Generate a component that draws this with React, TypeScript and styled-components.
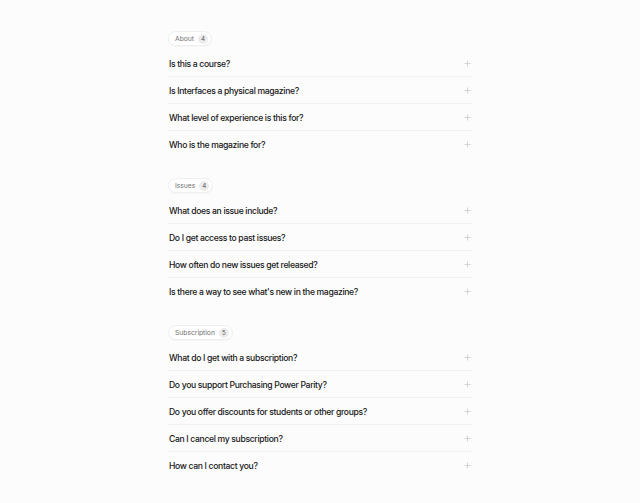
import React from 'react'
import styled, { createGlobalStyle } from 'styled-components'

const Global = createGlobalStyle`
    html, body {
        margin: 0;
        padding: 0;
        background: #fcfcfc;
    }
    body {
        font-family: Inter, "Noto Sans", sans-serif;
        -webkit-font-smoothing: antialiased;
    }
`

const Page = styled.div`
    display: flex;
    justify-content: center;
    padding: 31px 0 0 0;
`

const Column = styled.div`
    width: 304px;
    display: flex;
    flex-direction: column;
    gap: 20px;
`

const Group = styled.section`
    display: flex;
    flex-direction: column;
    align-items: flex-start;
`

const Badge = styled.div`
    display: inline-flex;
    align-items: center;
    gap: 4px;
    height: 15px;
    box-sizing: border-box;
    padding: 0 3px 0 6px;
    border: 1px solid #efefef;
    border-radius: 999px;
    background: #fff;
    box-shadow: 0 1px 1px rgba(0, 0, 0, 0.03);
    margin-bottom: 4px;
    span {
        font-size: 6.8px;
        color: #727272;
        letter-spacing: -0.05px;
    }
`

const Count = styled.i`
    font-style: normal;
    display: flex;
    align-items: center;
    justify-content: center;
    width: 10px;
    height: 10px;
    border-radius: 50%;
    background: #ececec;
    font-size: 6.2px;
    color: #555;
`

const List = styled.ul`
    list-style: none;
    margin: 0;
    padding: 0;
    width: 100%;
`

const Row = styled.li`
    display: flex;
    align-items: center;
    justify-content: space-between;
    height: 27px;
    box-sizing: border-box;
    border-bottom: 1px solid #f1f1f1;
    padding: 1px 1px 0 1px;
    font-size: 8.6px;
    font-weight: 500;
    letter-spacing: -0.33px;
    color: #171717;
    &:last-child {
        border-bottom-color: transparent;
    }
`

const Plus = () => (
    <svg width="7" height="7" viewBox="0 0 8 8" fill="none">
        <path d="M4 0.5v7M0.5 4h7" stroke="#cbcbcb" strokeWidth="0.9" />
    </svg>
)

const groups = [
    {
        title: 'About',
        items: [
            'Is this a course?',
            'Is Interfaces a physical magazine?',
            'What level of experience is this for?',
            'Who is the magazine for?',
        ],
    },
    {
        title: 'Issues',
        items: [
            'What does an issue include?',
            'Do I get access to past issues?',
            'How often do new issues get released?',
            "Is there a way to see what's new in the magazine?",
        ],
    },
    {
        title: 'Subscription',
        items: [
            'What do I get with a subscription?',
            'Do you support Purchasing Power Parity?',
            'Do you offer discounts for students or other groups?',
            'Can I cancel my subscription?',
            'How can I contact you?',
        ],
    },
]

const App = () => (
    <>
        <Global />
        <Page>
            <Column>
                {groups.map(g => (
                    <Group key={g.title}>
                        <Badge>
                            <span>{g.title}</span>
                            <Count>{g.items.length}</Count>
                        </Badge>
                        <List>
                            {g.items.map(q => (
                                <Row key={q}>
                                    {q}
                                    <Plus />
                                </Row>
                            ))}
                        </List>
                    </Group>
                ))}
            </Column>
        </Page>
    </>
)

export default App
